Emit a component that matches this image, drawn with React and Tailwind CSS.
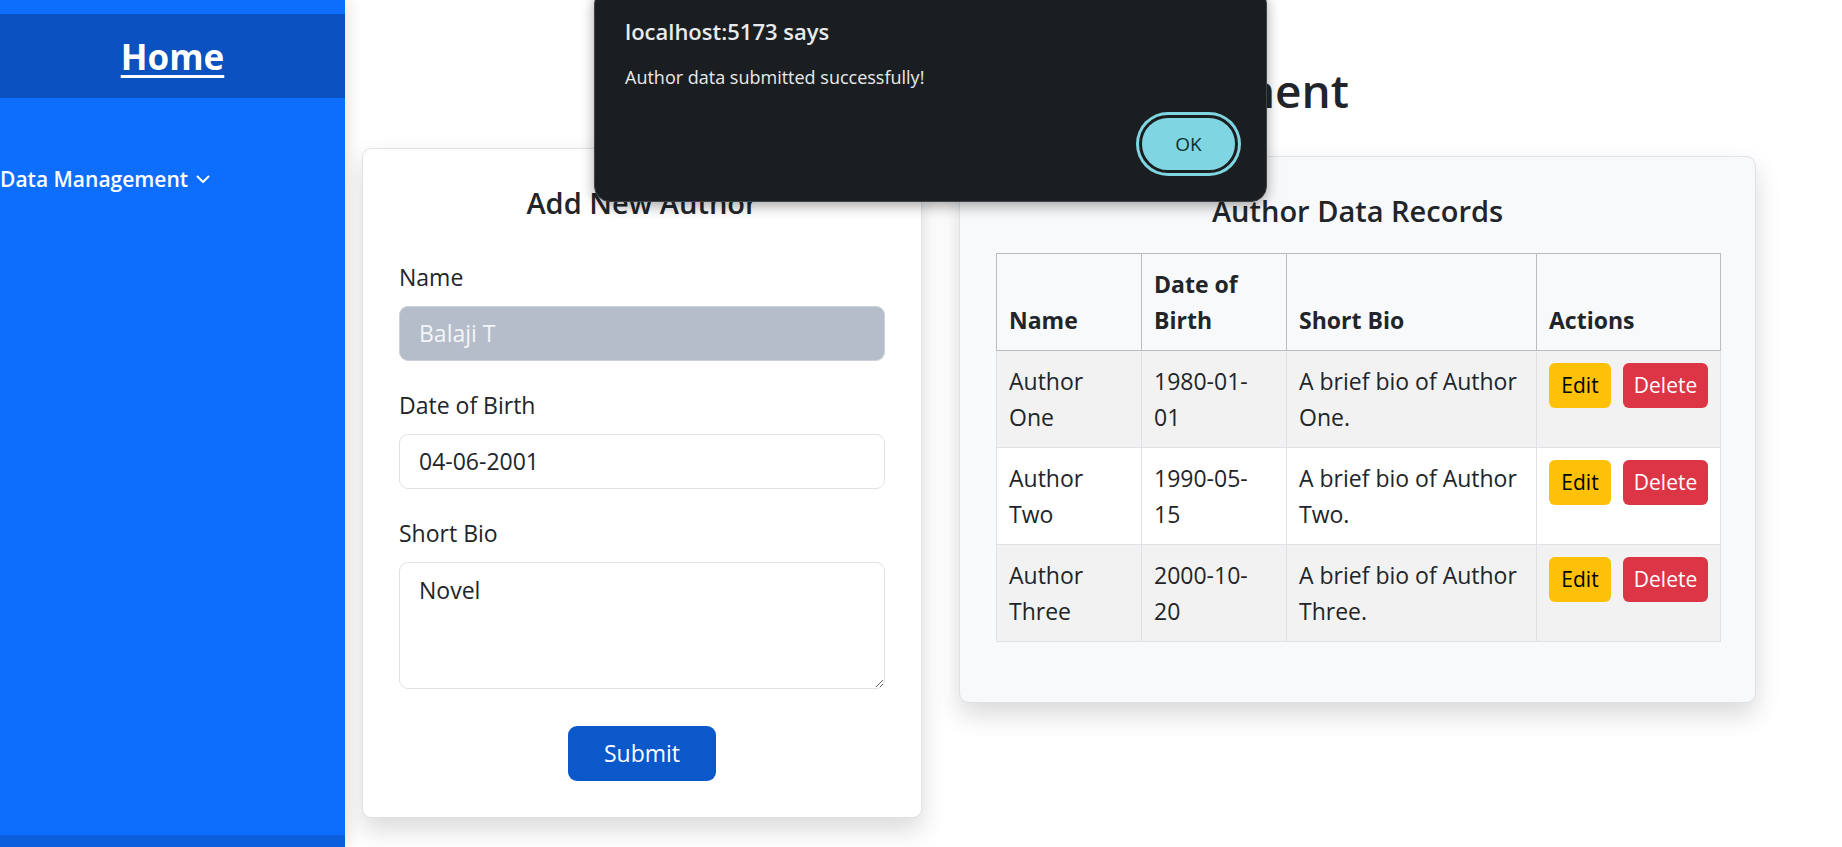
import React from 'react';

const AUTHORS = [
  { name: 'Author One', dob: '1980-01-01', bio: 'A brief bio of Author One.' },
  { name: 'Author Two', dob: '1990-05-15', bio: 'A brief bio of Author Two.' },
  { name: 'Author Three', dob: '2000-10-20', bio: 'A brief bio of Author Three.' },
];

/* ── Sidebar ────────────────────────────────────────────── */
function Sidebar() {
  return (
    <aside className="relative z-10 flex w-[345px] shrink-0 flex-col bg-[#0d6efd] shadow-[4px_0_14px_rgba(0,0,0,0.10)]">
      <div className="mt-[14px] flex h-[84px] items-center justify-center bg-[#0b51c0]">
        <a href="#" className="text-[35px] font-bold leading-none text-white underline decoration-[3px] underline-offset-[5px]">
          Home
        </a>
      </div>
      <div className="mt-[65px] flex items-center gap-[8px] text-[21px] font-semibold leading-[32px] text-white">
        <span>Data Management</span>
        <svg width="14" height="9" viewBox="0 0 14 9" fill="none">
          <path d="M1.5 1.5 7 7l5.5-5.5" stroke="white" strokeWidth="2" strokeLinecap="round" strokeLinejoin="round" />
        </svg>
      </div>
      <div className="mt-auto h-[12px] bg-[#0b5fdc]" />
    </aside>
  );
}

/* ── Form card ──────────────────────────────────────────── */
function Field({ label, children }) {
  return (
    <div className="mb-[27px]">
      <label className="mb-[11px] block text-[23px] leading-[35px]">{label}</label>
      {children}
    </div>
  );
}

function AuthorForm() {
  return (
    <div className="w-[560px] shrink-0 rounded-[9px] border border-[#dee2e6] bg-white px-[36px] pb-[36px] pt-[36px] shadow-[0_12px_26px_rgba(0,0,0,0.15)]">
      <h3 className="mb-[39px] text-center text-[29px] font-semibold leading-[36px]">Add New Author</h3>
      <Field label="Name">
        <input
          readOnly
          value="Balaji T"
          className="h-[55px] w-full rounded-[9px] border border-[#ccd2da] bg-[#b6bdca] px-[19px] text-[23px] text-[#f3f5f8] outline-none"
        />
      </Field>
      <Field label="Date of Birth">
        <input
          readOnly
          value="04-06-2001"
          className="h-[55px] w-full rounded-[9px] border border-[#dee2e6] bg-white px-[19px] text-[23px] outline-none"
        />
      </Field>
      <div>
        <label className="mb-[11px] block text-[23px] leading-[35px]">Short Bio</label>
        <textarea
          readOnly
          defaultValue="Novel"
          className="block h-[127px] w-full rounded-[9px] border border-[#dee2e6] bg-white px-[19px] py-[10px] text-[23px] leading-[35px] outline-none"
        />
      </div>
      <button className="mx-auto mt-[37px] block h-[55px] w-[148px] rounded-[9px] bg-[#0b58ca] text-[23px] text-white">
        Submit
      </button>
    </div>
  );
}

/* ── Records card ───────────────────────────────────────── */
function RecordsTable() {
  return (
    <div className="mt-[8px] w-[797px] shrink-0 rounded-[10px] border border-[#dee2e6] bg-[#f8f9fa] p-[36px] shadow-[0_12px_26px_rgba(0,0,0,0.15)]">
      <h3 className="mb-[24px] text-center text-[29px] font-semibold leading-[36px]">Author Data Records</h3>
      <table className="mb-[24px] w-full table-fixed border-collapse text-[23px] leading-[36px]">
        <colgroup>
          <col className="w-[145px]" />
          <col className="w-[145px]" />
          <col className="w-[250px]" />
          <col className="w-[184px]" />
        </colgroup>
        <thead>
          <tr className="bg-[#f8f9fa]">
            <th className="border border-[#b9bcc0] px-3 py-3 text-left align-bottom font-bold">Name</th>
            <th className="border border-[#b9bcc0] px-3 py-3 text-left align-bottom font-bold">Date of Birth</th>
            <th className="border border-[#b9bcc0] px-3 py-3 text-left align-bottom font-bold">Short Bio</th>
            <th className="border border-[#b9bcc0] px-3 py-3 text-left align-bottom font-bold">Actions</th>
          </tr>
        </thead>
        <tbody>
          {AUTHORS.map((a, i) => (
            <tr key={a.name} className={i % 2 === 0 ? 'bg-[#f2f2f2]' : 'bg-white'}>
              <td className="border border-[#dee2e6] px-3 py-3 align-top">{a.name}</td>
              <td className="border border-[#dee2e6] px-3 py-3 align-top">
                <span className="block max-w-[104px]">{a.dob}</span>
              </td>
              <td className="border border-[#dee2e6] px-3 py-3 align-top">{a.bio}</td>
              <td className="border border-[#dee2e6] px-3 py-3 align-top">
                <div className="flex gap-[12px] whitespace-nowrap">
                  <button className="h-[45px] w-[62px] rounded-[6px] bg-[#ffc107] text-[21px] text-black">Edit</button>
                  <button className="h-[45px] w-[85px] rounded-[6px] bg-[#dc3545] text-[21px] text-white">Delete</button>
                </div>
              </td>
            </tr>
          ))}
        </tbody>
      </table>
    </div>
  );
}

/* ── Browser alert ──────────────────────────────────────── */
function AlertDialog() {
  return (
    <div className="absolute left-[594px] top-[-12px] z-20 flex h-[214px] w-[673px] flex-col rounded-[16px] border border-[#3f4346] bg-[#1b1e20] pl-[30px] pr-[28px] pt-[27px] shadow-[0_4px_14px_rgba(0,0,0,0.35)]">
      <p className="text-[22px] font-semibold leading-[30px] text-[#e8eaed]">localhost:5173 says</p>
      <p className="mt-[18px] text-[18px] leading-[26px] text-[#e8eaed]">Author data submitted successfully!</p>
      <div className="mt-[25px] flex justify-end">
        <button className="h-[58px] w-[99px] rounded-full border-[3px] border-[#1b1e20] bg-[#7fd6e2] text-[19px] text-[#0d2f33] ring-[3px] ring-[#7fd6e2]">
          OK
        </button>
      </div>
    </div>
  );
}

/* ── Main ───────────────────────────────────────────────── */
export default function App() {
  return (
    <div className="relative flex h-[847px] w-full overflow-hidden bg-white font-['Open_Sans',sans-serif] text-[#212529]">
      <Sidebar />
      <main className="flex-1 pl-[17px] pt-[62px]">
        <div className="w-[1395px]">
          <h1 className="mb-[28px] text-center text-[46px] font-semibold leading-[1.25]">Author Data Management</h1>
          <div className="flex items-start gap-[37px]">
            <AuthorForm />
            <RecordsTable />
          </div>
        </div>
      </main>
      <AlertDialog />
    </div>
  );
}
